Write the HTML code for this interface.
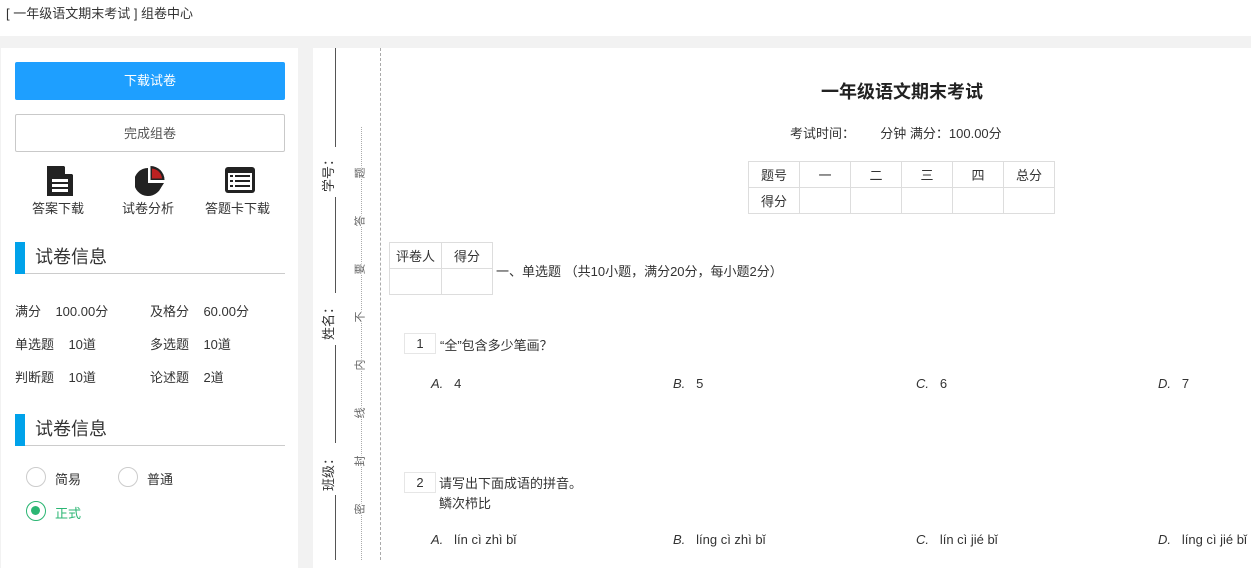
<!DOCTYPE html>
<html><head><meta charset="utf-8"><style>
*{margin:0;padding:0;box-sizing:border-box}
body{width:1251px;height:560px;overflow:hidden;background:#f2f2f2;font-family:"Liberation Sans","Noto Sans CJK SC",sans-serif;color:#333;font-size:13px;position:relative}
.a{position:absolute;white-space:nowrap}
#top{position:absolute;left:0;top:0;width:1251px;height:36px;background:#fff}
#left{position:absolute;left:1px;top:48px;width:297px;height:520px;background:#fff}
#paper{position:absolute;left:313px;top:48px;width:940px;height:520px;background:#fff}
.btn{position:absolute;left:15px;width:270px;height:38px;text-align:center;line-height:38px;font-size:13px;border-radius:2px}
.h{position:absolute;left:15px;width:270px;height:32px;border-bottom:1px solid #ccc;font-size:18px;line-height:30px;padding-left:20px;color:#333}
.h:before{content:"";position:absolute;left:0;top:0;width:10px;height:32px;background:#00a2ea}
.rot{position:absolute;transform:rotate(-90deg);transform-origin:center;font-size:13px;color:#333}
.sm{position:absolute;transform:rotate(-90deg);font-size:11px;line-height:12px;color:#666;left:355px}
table{border-collapse:collapse}
td{border:1px solid #ddd;text-align:center;font-size:13px;color:#333}
.radio{position:absolute;width:20px;height:20px;border:1.5px solid #ccc;border-radius:50%}
</style></head><body>
<div id="top"><div class="a" style="left:6px;top:3px;font-size:13px">[ 一年级语文期末考试 ] 组卷中心</div></div>
<div id="left"></div>
<div class="btn" style="top:62px;background:#1e9fff;color:#fff">下载试卷</div>
<div class="btn" style="top:114px;border:1px solid #c9c9c9;color:#555">完成组卷</div>
<svg class="a" style="left:47px;top:166px" width="27" height="30" viewBox="0 0 27 30"><path d="M0 0H17L26 9V30H0Z" fill="#222"/><path d="M18 0L26 8H18Z" fill="#fff"/><rect x="5" y="13" width="16" height="3" fill="#fff"/><rect x="5" y="18" width="16" height="3" fill="#fff"/><rect x="5" y="23" width="16" height="3" fill="#fff"/></svg>
<svg class="a" style="left:135px;top:166px" width="30" height="30" viewBox="0 0 30 30"><path d="M13 2A14 14 0 1 0 27 17H13Z" fill="#222"/><path d="M15.5 0A14 14 0 0 1 29.5 14H15.5Z" fill="#222"/><path d="M17 2.5A11 11 0 0 1 27 12.5H17Z" fill="#b22"/><path d="M16 17H29L23.5 25.5Z" fill="#222"/></svg>
<svg class="a" style="left:225px;top:167px" width="30" height="26" viewBox="0 0 30 26"><rect x="0" y="0" width="30" height="26" rx="3" fill="#222"/><rect x="3" y="6" width="24" height="17" fill="#fff"/><g fill="#222"><rect x="5" y="8" width="3" height="2"/><rect x="10" y="8" width="15" height="2"/><rect x="5" y="13" width="3" height="2"/><rect x="10" y="13" width="15" height="2"/><rect x="5" y="18" width="3" height="2"/><rect x="10" y="18" width="15" height="2"/></g></svg>
<div class="a" style="left:32px;top:198px">答案下载</div>
<div class="a" style="left:122px;top:198px">试卷分析</div>
<div class="a" style="left:205px;top:198px">答题卡下载</div>
<div class="h" style="top:242px">试卷信息</div>
<div class="a" style="left:15px;top:301px">满分&nbsp;&nbsp;&nbsp; 100.00分</div>
<div class="a" style="left:150px;top:301px">及格分&nbsp;&nbsp;&nbsp; 60.00分</div>
<div class="a" style="left:15px;top:334px">单选题&nbsp;&nbsp;&nbsp; 10道</div>
<div class="a" style="left:150px;top:334px">多选题&nbsp;&nbsp;&nbsp; 10道</div>
<div class="a" style="left:15px;top:367px">判断题&nbsp;&nbsp;&nbsp; 10道</div>
<div class="a" style="left:150px;top:367px">论述题&nbsp;&nbsp;&nbsp; 2道</div>
<div class="h" style="top:414px">试卷信息</div>
<div class="radio" style="left:26px;top:467px"></div><div class="a" style="left:55px;top:469px">简易</div>
<div class="radio" style="left:118px;top:467px"></div><div class="a" style="left:147px;top:469px">普通</div>
<div class="radio" style="left:26px;top:501px;border-color:#2bb673"><div style="position:absolute;left:4px;top:4px;width:9px;height:9px;border-radius:50%;background:#2bb673"></div></div><div class="a" style="left:55px;top:503px;color:#2bb673">正式</div>
<div id="paper"></div>
<div class="a" style="left:335px;top:48px;width:1px;height:99px;background:#555"></div>
<div class="a" style="left:335px;top:197px;width:1px;height:96px;background:#555"></div>
<div class="a" style="left:335px;top:345px;width:1px;height:98px;background:#555"></div>
<div class="a" style="left:335px;top:495px;width:1px;height:65px;background:#555"></div>
<div class="rot" style="left:308px;top:163px">学号：</div>
<div class="rot" style="left:308px;top:311px">姓名：</div>
<div class="rot" style="left:308px;top:462px">班级：</div>
<div class="a" style="left:361px;top:127px;height:433px;border-left:1px dotted #aaa"></div>
<div class="a" style="left:380px;top:48px;height:512px;border-left:1px dashed #aaa"></div>
<div class="sm" style="top:167px;background:#fff">题</div>
<div class="sm" style="top:215px;background:#fff">答</div>
<div class="sm" style="top:263px;background:#fff">要</div>
<div class="sm" style="top:311px;background:#fff">不</div>
<div class="sm" style="top:359px;background:#fff">内</div>
<div class="sm" style="top:407px;background:#fff">线</div>
<div class="sm" style="top:455px;background:#fff">封</div>
<div class="sm" style="top:503px;background:#fff">密</div>
<div class="a" style="left:821px;top:78px;font-size:18px;font-weight:bold;color:#222">一年级语文期末考试</div>
<div class="a" style="left:790px;top:123px">考试时间：&nbsp;&nbsp;&nbsp;&nbsp;&nbsp;&nbsp; 分钟 满分：100.00分</div>
<table class="a" style="left:748px;top:161px"><tr style="height:26px"><td style="width:51px">题号</td><td style="width:51px">一</td><td style="width:51px">二</td><td style="width:51px">三</td><td style="width:51px">四</td><td style="width:51px">总分</td></tr><tr style="height:26px"><td>得分</td><td></td><td></td><td></td><td></td><td></td></tr></table>
<table class="a" style="left:389px;top:242px"><tr style="height:26px"><td style="width:52px">评卷人</td><td style="width:51px">得分</td></tr><tr style="height:26px"><td></td><td></td></tr></table>
<div class="a" style="left:496px;top:261px">一、单选题 （共10小题，满分20分，每小题2分）</div>
<div class="a" style="left:404px;top:333px;width:32px;height:21px;border:1px solid #e6e6e6;text-align:center;line-height:19px">1</div>
<div class="a" style="left:440px;top:335px">“全”包含多少笔画？</div>
<div class="a" style="left:431px;top:376px"><i>A.</i>&nbsp;&nbsp; 4</div>
<div class="a" style="left:673px;top:376px"><i>B.</i>&nbsp;&nbsp; 5</div>
<div class="a" style="left:916px;top:376px"><i>C.</i>&nbsp;&nbsp; 6</div>
<div class="a" style="left:1158px;top:376px"><i>D.</i>&nbsp;&nbsp; 7</div>
<div class="a" style="left:404px;top:472px;width:32px;height:21px;border:1px solid #e6e6e6;text-align:center;line-height:19px">2</div>
<div class="a" style="left:439px;top:473px">请写出下面成语的拼音。</div>
<div class="a" style="left:439px;top:493px">鳞次栉比</div>
<div class="a" style="left:431px;top:532px"><i>A.</i>&nbsp;&nbsp; lín cì zhì bǐ</div>
<div class="a" style="left:673px;top:532px"><i>B.</i>&nbsp;&nbsp; líng cì zhì bǐ</div>
<div class="a" style="left:916px;top:532px"><i>C.</i>&nbsp;&nbsp; lín cì jié bǐ</div>
<div class="a" style="left:1158px;top:532px"><i>D.</i>&nbsp;&nbsp; líng cì jié bǐ</div>
</body></html>
